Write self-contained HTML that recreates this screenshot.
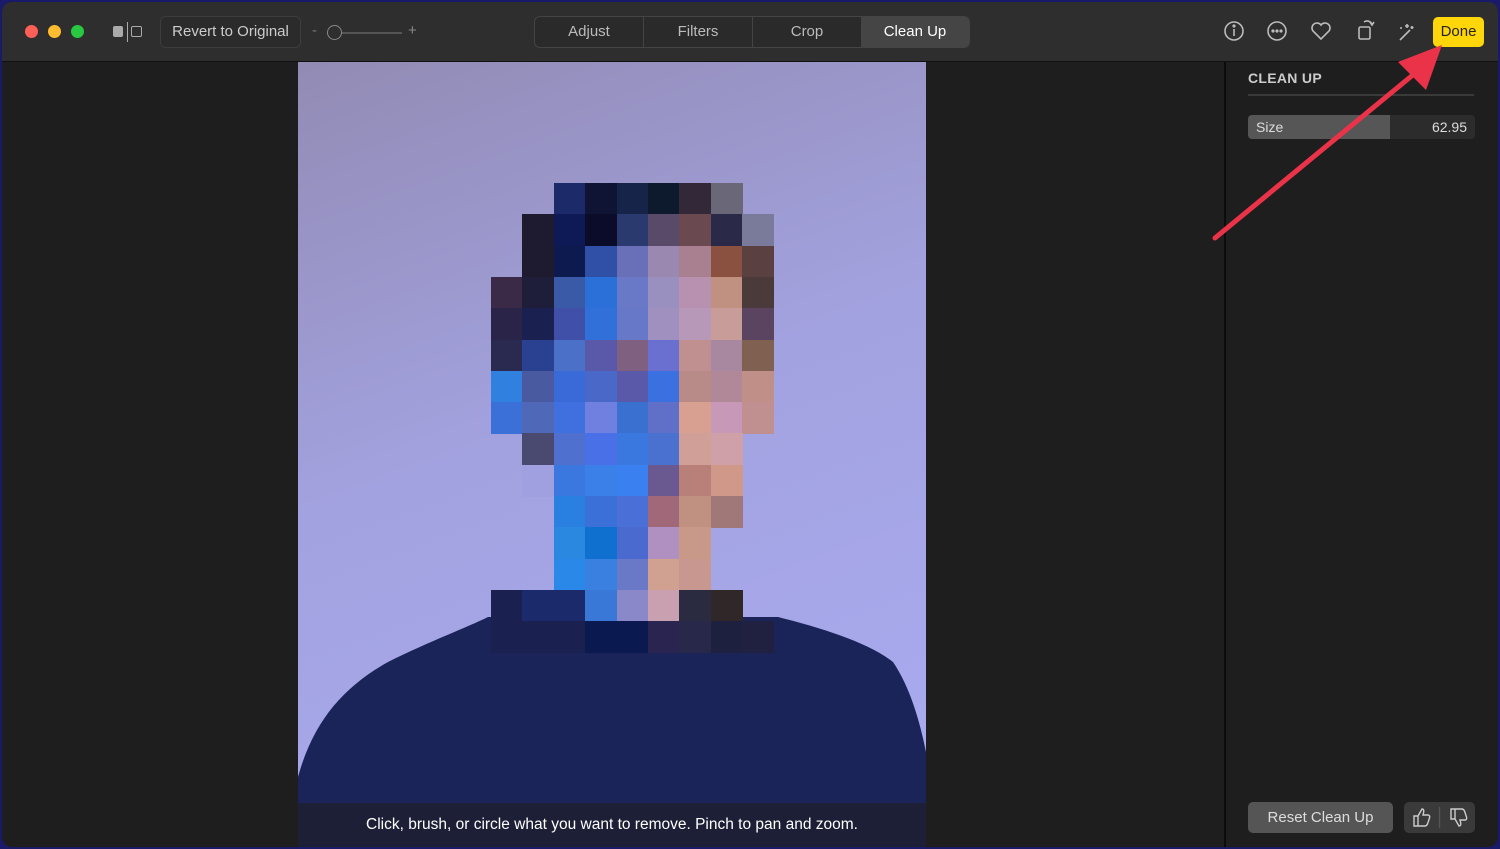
<!DOCTYPE html>
<html><head><style>
*{margin:0;padding:0;box-sizing:border-box}
body{width:1500px;height:849px;background:#1a1a6a;font-family:"Liberation Sans",sans-serif;overflow:hidden;position:relative}
.win{position:absolute;left:2px;top:2px;width:1496px;height:845px;background:#1e1e1e;border-radius:10px;overflow:hidden}
.tb{position:absolute;left:0;top:0;width:100%;height:60px;background:#2e2e2e;border-bottom:1px solid #111}
.dot{position:absolute;top:23px;width:13px;height:13px;border-radius:50%}
.btn{position:absolute;color:#d8d8d8;font-size:15px}
.seg{position:absolute;left:532px;top:14px;width:436px;height:32px;border:1px solid #444;border-radius:6px;background:#2a2a2a}
.seg div{position:absolute;top:0;height:30px;line-height:30px;text-align:center;color:#bbb;font-size:15px}
.photo{position:absolute;left:296px;top:60px;width:628px;height:785px;background:linear-gradient(160deg,#928bb4 0%,#a3a2e0 45%,#a9acf2 100%);overflow:hidden}
.cap{position:absolute;left:0;bottom:0;width:100%;height:44px;background:rgba(30,30,40,0.7);color:#fff;font-size:15.5px;text-align:center;line-height:44px}
.side{position:absolute;left:1222px;top:60px;width:274px;height:785px;border-left:2px solid #0c0c0c;background:#1e1e1e}
.px{position:absolute;width:32px;height:32px}
</style></head><body>
<div class="win">
<div class="tb">
<div class="dot" style="left:23px;background:#fe5f57"></div>
<div class="dot" style="left:46px;background:#febc2e"></div>
<div class="dot" style="left:69px;background:#28c840"></div>
<div style="position:absolute;left:111px;top:24px;width:10px;height:11px;background:#aaa;border-radius:2px"></div>
<div style="position:absolute;left:125px;top:20px;width:1px;height:20px;background:#aaa"></div>
<div style="position:absolute;left:129px;top:24px;width:11px;height:11px;border:1.5px solid #aaa;border-radius:2px"></div>
<div style="position:absolute;left:158px;top:14px;width:141px;height:32px;border:1px solid #3d3d3d;border-radius:6px;background:#2b2b2b;color:#ccc;font-size:15px;line-height:30px;text-align:center">Revert to Original</div>
<div class="btn" style="left:310px;top:20px;color:#777">-</div>
<div style="position:absolute;left:330px;top:30px;width:70px;height:2px;background:#555"></div>
<div style="position:absolute;left:325px;top:23px;width:15px;height:15px;border:1.5px solid #888;border-radius:50%;background:#2e2e2e"></div>
<div class="btn" style="left:406px;top:20px;color:#888">+</div>
<div class="seg">
<div style="left:0;width:108px">Adjust</div>
<div style="left:108px;width:109px;border-left:1px solid #444">Filters</div>
<div style="left:217px;width:109px;border-left:1px solid #444">Crop</div>
<div style="left:326px;width:108px;background:#454545;color:#fff;border-radius:0 5px 5px 0">Clean Up</div>
</div>
<svg style="position:absolute;left:1210px;top:12px" width="210" height="34" fill="none" stroke="#bbb" stroke-width="1.6">
<circle cx="22" cy="17" r="9"/><line x1="22" y1="15" x2="22" y2="22"/><circle cx="22" cy="12" r="0.8" fill="#bbb"/>
<circle cx="65" cy="17" r="9"/><circle cx="61" cy="17" r="0.8" fill="#bbb"/><circle cx="65" cy="17" r="0.8" fill="#bbb"/><circle cx="69" cy="17" r="0.8" fill="#bbb"/>
<path d="M109 25 L101 17 A4.5 4.5 0 0 1 109 11 A4.5 4.5 0 0 1 117 17 Z"/>
<rect x="147" y="13" width="11" height="12" rx="1.5"/><path d="M152 8 A5 5 0 0 1 160 11 M158 8 L160 11 L162 8"/>
<path d="M188 26 L198 16 M195 10 l0 4 M193 12 l4 0 M200 12 l0 3 M198.5 13.5 l3 0 M188 14 l2 0"/>
</svg>
<div style="position:absolute;left:1431px;top:15px;width:51px;height:30px;background:#ffd60a;border-radius:5px;color:#222;font-size:15px;line-height:30px;text-align:center">Done</div>
</div>
<div class="photo">
<svg width="628" height="785" style="position:absolute;left:0;top:0">
<path d="M0 715 C15 660 45 625 90 600 C130 580 170 565 190 555 L480 555 C520 565 570 580 595 600 C612 625 622 660 628 690 L628 785 L0 785 Z" fill="#1a2459"/>
</svg>
<div id="g" style="position:absolute;left:193px;top:121px"></div>
<div class="cap">Click, brush, or circle what you want to remove. Pinch to pan and zoom.</div>
</div>
<div class="side">
<div style="position:absolute;left:22px;top:8px;color:#ccc;font-size:14px;font-weight:bold;letter-spacing:.3px">CLEAN UP</div>
<div style="position:absolute;left:22px;top:32px;width:226px;height:2px;background:#3a3a3a"></div>
<div style="position:absolute;left:22px;top:53px;width:227px;height:24px;background:#2c2c2c;border-radius:4px;overflow:hidden">
<div style="position:absolute;left:0;top:0;width:142px;height:24px;background:#565656"></div>
<div style="position:absolute;left:8px;top:4px;color:#ddd;font-size:14px">Size</div>
<div style="position:absolute;right:8px;top:4px;color:#ddd;font-size:14px">62.95</div>
</div>
<div style="position:absolute;left:22px;top:740px;width:145px;height:31px;background:#555;border-radius:5px;color:#ddd;font-size:15px;line-height:31px;text-align:center">Reset Clean Up</div>
<div style="position:absolute;left:178px;top:740px;width:71px;height:31px;background:#3a3a3a;border-radius:5px"></div>
<svg style="position:absolute;left:178px;top:740px" width="71" height="31" fill="none" stroke="#ccc" stroke-width="1.4">
<path d="M10 14 h4 v10 h-4 z M14 14 l4 -7 c2 0 2 2 1.5 4 l-0.5 2 h5 c1.5 0 2 1.5 1.5 3 l-2 6 c-0.5 1 -1 2 -2.5 2 h-7"/>
<line x1="35.5" y1="5" x2="35.5" y2="26" stroke="#555"/>
<path d="M47 17 h4 v-10 h-4 z M51 17 l4 7 c2 0 2 -2 1.5 -4 l-0.5 -2 h5 c1.5 0 2 -1.5 1.5 -3 l-2 -6 c-0.5 -1 -1 -2 -2.5 -2 h-7"/>
</svg>
</div>
<svg style="position:absolute;left:0;top:0" width="1496" height="845">
<line x1="1213" y1="236" x2="1412" y2="72" stroke="#ea3349" stroke-width="5" stroke-linecap="round"/>
<path d="M1440 43 L1396 60 L1424 88 Z" fill="#ea3349"/>
</svg>
</div>
<script>
var B=null;
var R=[
[B,B,'#1c2a6a','#0f1435','#16244a','#0d1a2e','#322838','#6a6878',B],
[B,'#1e1a30','#0d1a55','#0a0c2a','#2a3a6e','#5a4a6a','#6a4a50','#2a2a48','#7a7a9a'],
[B,'#1e1a30','#0d1a50','#3050a8','#6a70b8','#9a88b0','#a88090','#8a5040','#5a4040'],
['#3a2a48','#1e1e3a','#3a5aa8','#2a70d8','#6a78c8','#9a90c0','#b890b0','#c09080','#4a3a3a'],
['#2a2448','#1a2050','#4050a8','#3070d8','#6878c8','#a090c0','#b898b8','#c89c98','#5a4460'],
['#2a2a50','#2a4090','#4a70c8','#5a58a8','#806080','#6a70d0','#c09090','#a888a0','#806050'],
['#3080e0','#4a5aa0','#3a6ad8','#4a68c8','#5a58a8','#3a70e0','#b88a88','#b08898','#c09088'],
['#3a70d8','#5068b8','#4070e0','#7080e0','#3a70d0','#6070c8','#d8a090','#c898b8','#c09090'],
[B,'#4a4a70','#5070d0','#4a70e8','#3a78e0','#4a70d0','#d0a098','#d0a0a8',B],
[B,'#a0a0e0','#3a78e0','#3a80e8','#3a80f0','#6a5890','#b88078','#d09888',B],
[B,B,'#2a80e0','#3a70d8','#4a70d8','#a06878','#c09080','#a07878',B],
[B,B,'#2a88e0','#1070d0','#4a6ad0','#b090c0','#c89888',B,B],
[B,B,'#2a88e8','#3a80e0','#6a78c8','#d0a090','#c89890',B,B],
['#1a2050','#1a2a6a','#1a2a6a','#3a78d8','#8a88c8','#c8a0b0','#2a2a40','#302828',B],
['#1a2050','#1a2050','#1a2050','#0a1a50','#0a1a50','#2a2450','#28284a','#1e2040','#202040']];
var g=document.getElementById('g'),h='';
R.forEach(function(r,i){r.forEach(function(c,j){if(c)h+='<div class="px" style="left:'+(j*31.4)+'px;top:'+(i*31.3)+'px;background:'+c+'"></div>';});});
g.innerHTML=h;
</script>
</body></html>
